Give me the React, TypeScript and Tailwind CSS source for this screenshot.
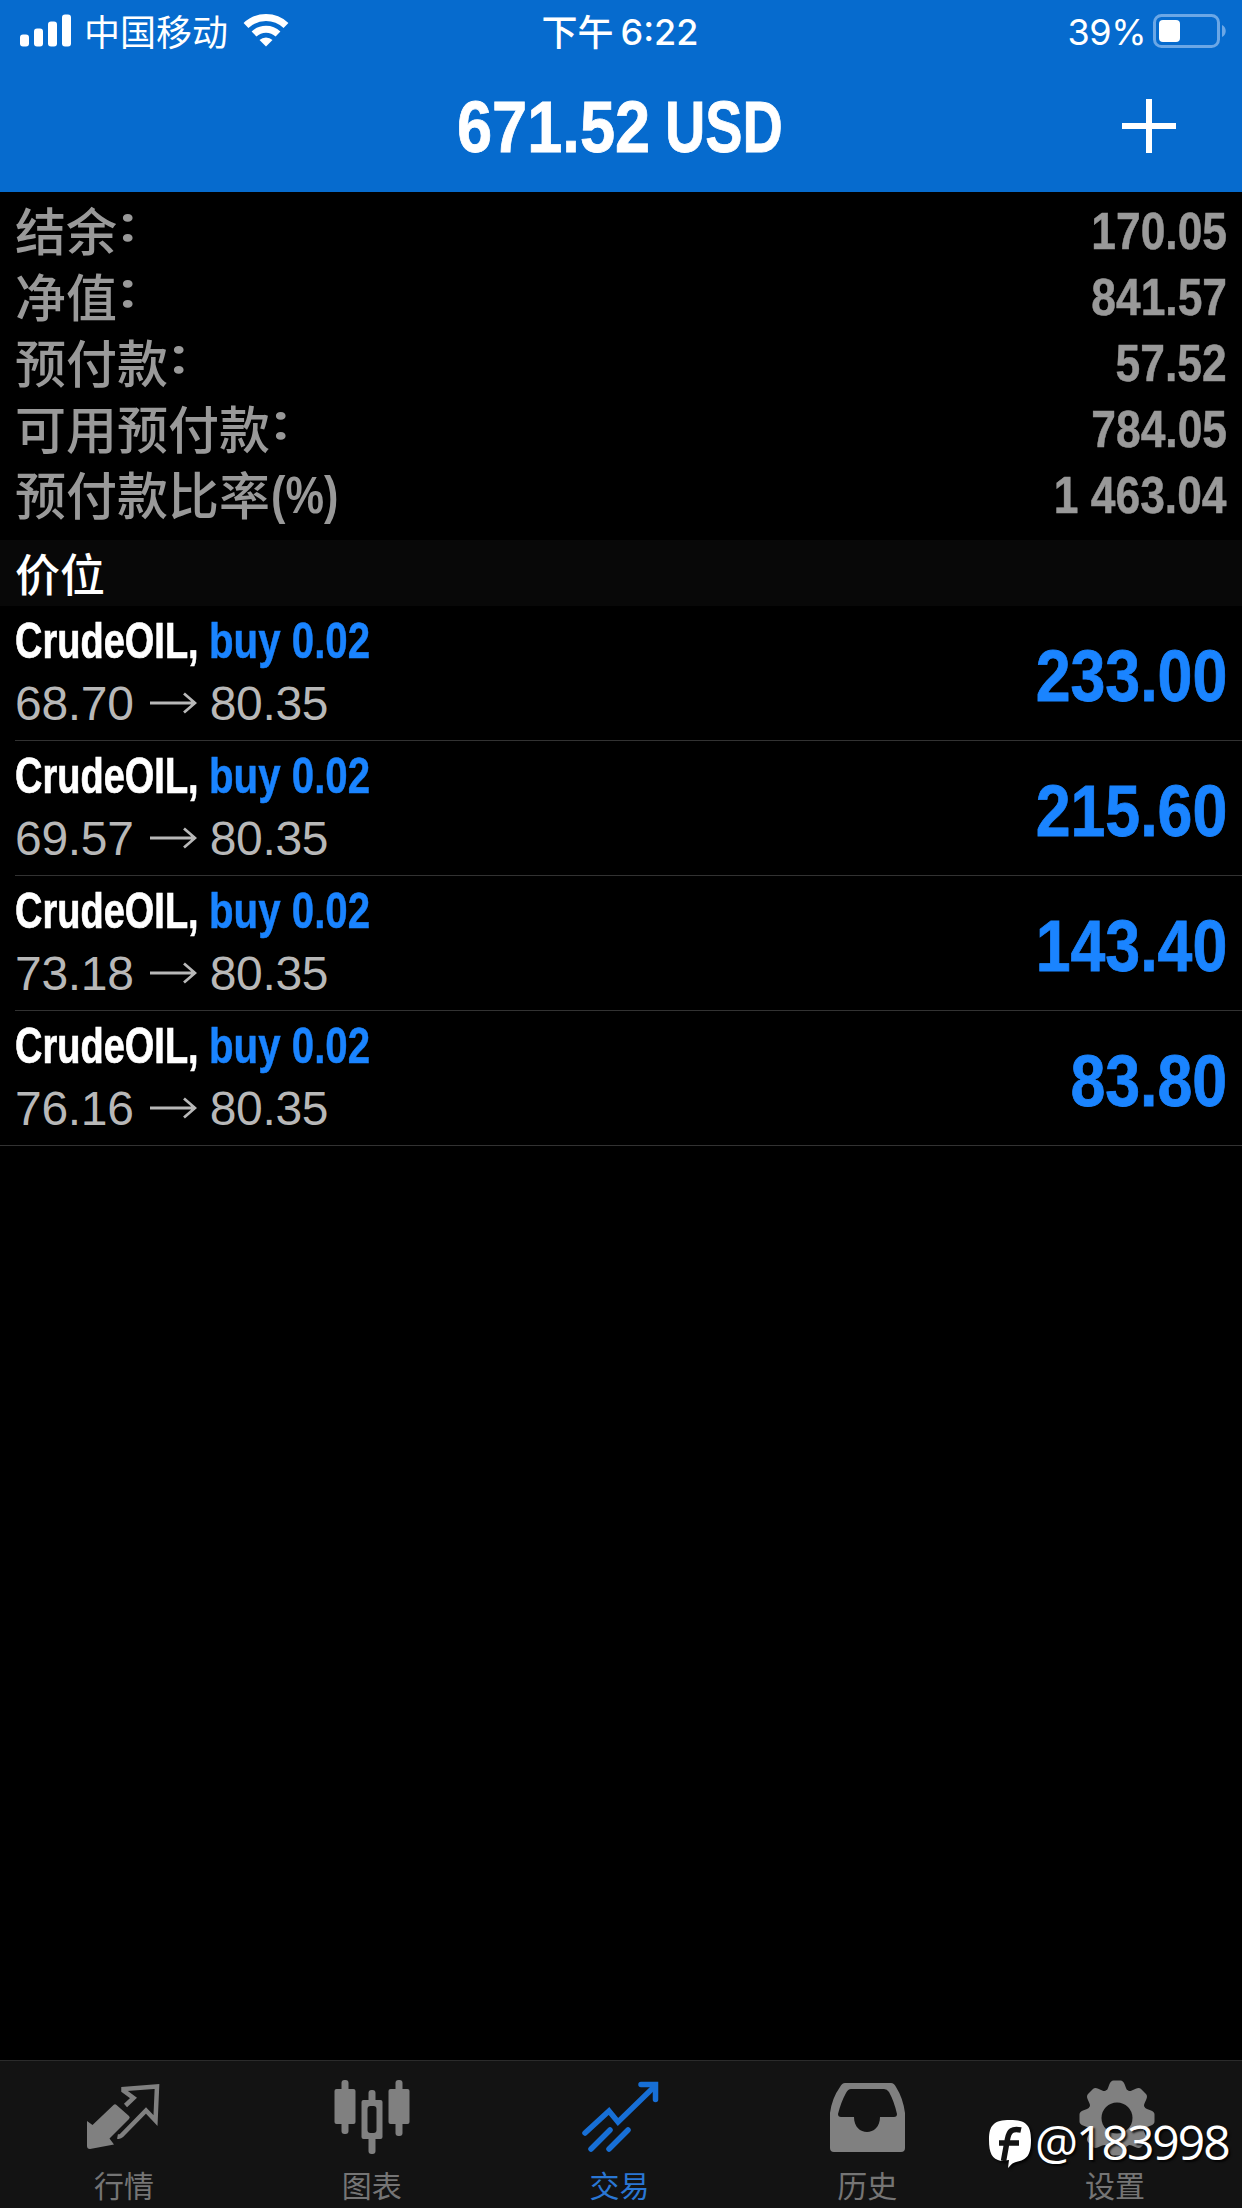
const summary = [
  { label: "结余", colon: true, value: "170.05" },
  { label: "净值", colon: true, value: "841.57" },
  { label: "预付款", colon: true, value: "57.52" },
  { label: "可用预付款", colon: true, value: "784.05" },
  { label: "预付款比率", suffix: "(%)", value: "1 463.04" },
];

const positions = [
  { open: "68.70", current: "80.35", profit: "233.00" },
  { open: "69.57", current: "80.35", profit: "215.60" },
  { open: "73.18", current: "80.35", profit: "143.40" },
  { open: "76.16", current: "80.35", profit: "83.80" },
];

const StatusBar = () => {
  return (
    <div className="grid grid-cols-3 h-[60px] text-white font-[Inter,'Noto_Sans_CJK_SC',sans-serif] text-[36px] leading-[60px]">
      <div className="flex items-center pl-5">
        <svg className="-mt-[2px]" width="52" height="33" viewBox="0 0 52 33" fill="white">
          <rect x="0" y="20.5" width="9" height="12" rx="3" />
          <rect x="14" y="14.5" width="9" height="18" rx="3" />
          <rect x="28" y="7.5" width="9" height="25" rx="3" />
          <rect x="42" y="0.5" width="9" height="32" rx="3" />
        </svg>
        <span className="ml-[12px] -mt-[2px] font-['Noto_Sans_CJK_SC',sans-serif]">中国移动</span>
        <svg className="ml-[15px] -mt-[2px]" width="46" height="34" viewBox="0 0 46 34" fill="none" stroke="white">
          <path d="M3 12.5a29 29 0 0 1 40 0" strokeWidth="7" />
          <path d="M11 21a17.5 17.5 0 0 1 24 0" strokeWidth="7" />
          <path d="M16.5 27a9.5 9.5 0 0 1 13 0L23 33.5z" fill="white" stroke="none" />
        </svg>
      </div>
      <div className="flex items-center justify-center pr-[2px] font-medium">
        <span className="-mt-[2px] font-['Noto_Sans_CJK_SC',sans-serif]">下午</span>
        <span className="ml-[7px] mt-[1px] text-[36px]">6:22</span>
      </div>
      <div className="flex items-center justify-end pr-[15px]">
        <span className="mt-[2px] text-[36px] tracking-[-0.5px]">39%</span>
        <svg className="ml-[7px] -mt-[1px]" width="74" height="36" viewBox="0 0 74 36">
          <rect x="1.5" y="2.5" width="64" height="31" rx="7" fill="none" stroke="#6ba7e6" strokeWidth="3" />
          <rect x="6" y="7" width="21" height="22" rx="4" fill="white" />
          <path d="M69 12c5 2 5 10 0 12z" fill="#6ba7e6" />
        </svg>
      </div>
    </div>
  );
};

const Header = () => {
  return (
    <header className="h-[192px] bg-[#066bce]">
      <StatusBar />
      <div className="grid grid-cols-[1fr_340px_1fr] items-center h-[132px]">
        <div />
        <h1 className="flex justify-center text-white font-bold text-[73px] leading-[134px] whitespace-nowrap [-webkit-text-stroke:0.8px_white]">
          <span className="w-[208px]">
            <span className="inline-block origin-left scale-x-[0.865]">671.52</span>
          </span>
          <span className="w-[120px]">
            <span className="inline-block origin-left scale-x-[0.765]">USD</span>
          </span>
        </h1>
        <div className="flex justify-end pr-[66px]">
          <svg className="-mt-[2px]" width="54" height="54" viewBox="0 0 54 54" fill="white">
            <rect x="0" y="24" width="54" height="6" />
            <rect x="24" y="0" width="6" height="54" />
          </svg>
        </div>
      </div>
    </header>
  );
};

const Summary = () => {
  return (
    <div className="h-[348px] pt-[4px] pl-[15px] pr-[15px] text-[#999999]">
      {summary.map((row) => (
        <div key={row.label} className="flex justify-between h-[66px] text-[51px] leading-[66px]">
          <div className="flex font-medium font-['Noto_Sans_CJK_SC',sans-serif]">
            {row.label}
            {row.colon && <span className="-mt-[6px] -ml-[2px] scale-y-80 font-bold">：</span>}
            {row.suffix && (
              <span className="inline-block mt-[3px] ml-[1px] origin-left scale-x-[0.85] font-bold font-['Liberation_Sans',sans-serif]">
                {row.suffix}
              </span>
            )}
          </div>
          <span className="inline-block mt-[3px] origin-right scale-x-[0.87] font-bold [-webkit-text-stroke:0.5px_#999999]">
            {row.value}
          </span>
        </div>
      ))}
    </div>
  );
};

const Arrow = () => {
  return (
    <svg className="ml-[16px] mr-[13px] -mt-[2px]" width="47" height="22" viewBox="0 0 47 22" fill="none" stroke="#b8b8b8" strokeWidth="2.8">
      <path d="M0 11h45M34 1.5l11 9.5-11 9.5" />
    </svg>
  );
};

const Positions = () => {
  return (
    <div>
      {positions.map((p, i) => (
        <div key={p.open} className={i === positions.length - 1 ? "" : "pl-[15px]"}>
          <div
            className={
              i === positions.length - 1
                ? "flex justify-between h-[135px] pl-[15px] pr-[15px] border-b border-[#323232]"
                : "flex justify-between h-[135px] pr-[15px] border-b border-[#323232]"
            }
          >
            <div className="pt-[5px]">
              <div className="flex font-bold text-[50px] leading-[60px] text-white">
                <span className="w-[194px]">
                  <span className="inline-block origin-left scale-x-[0.76] [-webkit-text-stroke:0.7px_white]">CrudeOIL,</span>
                </span>
                <span className="inline-block origin-left scale-x-[0.805] text-[#1a84ff] [-webkit-text-stroke:0.5px_#1a84ff]">
                  buy 0.02
                </span>
              </div>
              <div className="flex items-center text-[48px] leading-[66px] tracking-[-0.3px] text-[#b8b8b8]">
                {p.open}
                <Arrow />
                {p.current}
              </div>
            </div>
            <span className="inline-block origin-right scale-x-[0.87] font-bold text-[72px] leading-[140px] text-[#1a84ff] [-webkit-text-stroke:0.8px_#1a84ff]">
              {p.profit}
            </span>
          </div>
        </div>
      ))}
    </div>
  );
};

const QuotesIcon = () => (
  <svg width="76" height="76" viewBox="0 0 76 76">
    <path
      d="M1 37l5.500 4L27.500 21q1.500-1.500 3 0L43 32q1.500 1.500 0 3L23.500 54.500l4.500 6L4 65q-3 0-3-3z"
      fill="#808080"
    />
    <path
      d="M39.500 21.500l8-7.500-10-7.500v-1.500L71 2.500l-1.500 34-9.500-10-24.500 25q-1.500 1.500-4 1"
      fill="none"
      stroke="#808080"
      strokeWidth="4.5"
    />
  </svg>
);

const ChartIcon = () => (
  <svg width="76" height="76" viewBox="0 0 76 76" fill="#808080">
    <rect x="7.5" y="-4" width="7" height="54" rx="3" />
    <rect x="0.5" y="5" width="21" height="35" rx="2" />
    <rect x="61.5" y="-4" width="7" height="56" rx="3" />
    <rect x="54.5" y="5" width="21" height="35" rx="2" />
    <rect x="34.5" y="6" width="7" height="64" rx="3" />
    <rect x="27.5" y="16" width="21" height="39" rx="2" />
    <rect x="33.5" y="22" width="9" height="27" rx="3" fill="#131313" />
  </svg>
);

const TradeIcon = () => (
  <svg width="76" height="76" viewBox="0 0 76 76" fill="none" stroke="#176fd6" strokeWidth="5.5" strokeLinecap="round">
    <path d="M4 49l24-22 9 11L74 2" />
    <path d="M60 0.5h14.5v15" strokeLinejoin="miter" />
    <path d="M10 65l19-19M28 65l19-19" />
  </svg>
);

const HistoryIcon = () => (
  <svg width="76" height="76" viewBox="0 0 76 76">
    <path
      d="M15-1h46q3 0 5 4 7 11 9 26v35q0 4-4 4H4q-4 0-4-4V29Q2 14 10 3q2-4 5-4zM21 5q-3 0-5 4Q11 18 8 30q0 3 3 3h13c0 20 26 20 26 0h14q3 0 3-3-3-13-8-22-2-3-5-3z"
      fill="#808080"
      fillRule="evenodd"
      transform="translate(1 0)"
    />
  </svg>
);

const GearIcon = () => (
  <svg width="76" height="76" viewBox="0 0 76 76">
    <g fill="#808080" transform="translate(40 34)">
      <circle r="29.500" />
      {[0, 45, 90, 135, 180, 225, 270, 315].map((a) => (
        <path key={a} d="M-14-26q4-1 5-4l1.500-4q1.500-3.500 4-3.500h7q2.500 0 4 3.500l1.500 4q1 3 5 4z" transform={"rotate(" + a + ")"} />
      ))}
      <circle r="15.5" fill="#131313" />
    </g>
  </svg>
);

const tabs = [
  { label: "行情", icon: <QuotesIcon /> },
  { label: "图表", icon: <ChartIcon /> },
  { label: "交易", icon: <TradeIcon />, active: true },
  { label: "历史", icon: <HistoryIcon /> },
  { label: "设置", icon: <GearIcon /> },
];

const Watermark = () => {
  return (
    <div className="absolute left-[988px] top-[56px] flex text-white">
      <svg className="mt-[2px] drop-shadow-[2px_2px_1px_rgba(0,0,0,0.8)]" width="44" height="52" viewBox="0 0 44 52">
        <path d="M22 1C38 1 43 6 43 21c0 15-4 20-15 22-4 1-5 3-8 6L21 41l-8 1C4 40 1 34 1 21 1 6 6 1 22 1z" fill="white" />
        <path d="M33 11c-9-2-12 1-13.500 9l-4 22M11 24h20" fill="none" stroke="#131313" strokeWidth="5.5" />
      </svg>
      <span className="ml-[3px] text-[48px] leading-[49px] tracking-[-2px] font-['Open_Sans',sans-serif] [text-shadow:2px_2px_2px_rgba(0,0,0,0.8)]">
        @183998
      </span>
    </div>
  );
};

const TabBar = () => {
  return (
    <nav className="relative h-[148px] bg-[#131313] border-t border-[#2b2b2b]">
      <div className="grid grid-cols-5 h-full pr-[3px]">
        {tabs.map((t) => (
          <div key={t.label} className="flex flex-col items-center pt-[23px] [&_svg]:overflow-visible">
            {t.icon}
            <span
              className={
                t.active
                  ? "mt-[2px] text-[30px] leading-[44px] text-[#2a77d4] font-['Noto_Sans_CJK_SC',sans-serif]"
                  : "mt-[2px] text-[30px] leading-[44px] text-[#757575] font-['Noto_Sans_CJK_SC',sans-serif]"
              }
            >
              {t.label}
            </span>
          </div>
        ))}
      </div>
      <Watermark />
    </nav>
  );
};

const App = () => {
  return (
    <div className="flex flex-col w-[1242px] h-[2208px] overflow-hidden bg-black font-['Liberation_Sans',sans-serif]">
      <Header />
      <Summary />
      <div className="h-[66px] bg-[#080808] pl-[15px] text-white text-[45px] leading-[66px] font-medium font-['Noto_Sans_CJK_SC',sans-serif]">
        价位
      </div>
      <Positions />
      <div className="flex-grow" />
      <TabBar />
    </div>
  );
};

export default App;
